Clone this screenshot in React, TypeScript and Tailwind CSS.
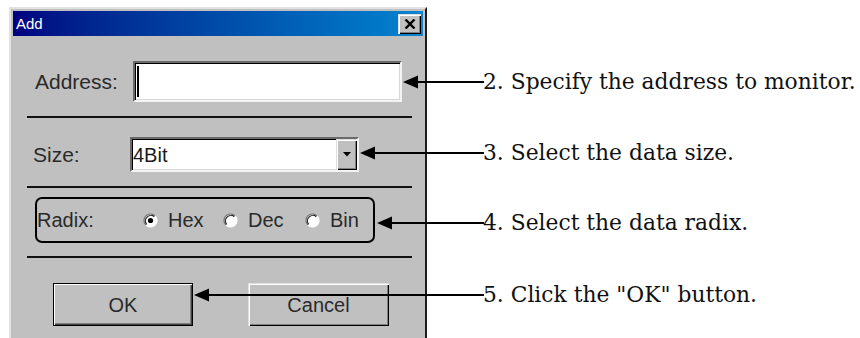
const ui = "font-['Liberation_Sans',Arial,sans-serif]";
const serif = "font-['DejaVu_Serif','Liberation_Serif',serif]";

const sunken =
  "border-2 border-t-[#6a6a6a] border-l-[#6a6a6a] border-r-[#f4f4f4] border-b-[#f4f4f4] shadow-[inset_1px_1px_0_#000,inset_-1px_-1px_0_#d8d8d8]";
const raised =
  "bg-[#c0c0c0] shadow-[inset_1px_1px_0_#dfdfdf,inset_2px_2px_0_#fff,inset_-1px_-1px_0_#000,inset_-2px_-2px_0_#808080]";

function Separator({ className = "" }: { className?: string }) {
  return <div className={`ml-[14px] w-[385px] h-[2px] bg-[#111] ${className}`} />;
}

function Radio({ label, checked, width }: { label: string; checked?: boolean; width: string }) {
  return (
    <div className={`flex items-center ${width}`}>
      <svg width={15} height={15} viewBox="0 0 15 15" className="shrink-0">
        <circle cx={7.5} cy={7.5} r={6.5} fill="#fff" />
        <path d="M2.9 12.1A6.5 6.5 0 0 1 12.1 2.9" fill="none" stroke="#707070" strokeWidth={1.2} />
        <path d="M3.7 11.3A5.4 5.4 0 0 1 11.3 3.7" fill="none" stroke="#202020" strokeWidth={1.2} />
        <path d="M12.1 2.9A6.5 6.5 0 0 1 2.9 12.1" fill="none" stroke="#fff" strokeWidth={1.2} />
        {checked && <circle cx={7.5} cy={7.5} r={2.6} fill="#000" />}
      </svg>
      <span className="ml-[10px] text-[20px] leading-none text-[#2a2a2a]">{label}</span>
    </div>
  );
}

const notes = [
  { text: "2. Specify the address to monitor.", mt: "mt-[67px]" },
  { text: "3. Select the data size.", mt: "mt-[41px]" },
  { text: "4. Select the data radix.", mt: "mt-[40px]" },
  { text: '5. Click the "OK" button.', mt: "mt-[42px]" },
];

export default function App() {
  return (
    <div className="relative w-[860px] h-[338px] overflow-hidden bg-white">
      <div className="flex">
        {/* Dialog window */}
        <div
          className={`ml-[9px] mt-[7px] w-[418px] h-[340px] shrink-0 bg-[#c0c0c0] border-2 border-t-[#e2e2e2] border-l-[#e2e2e2] border-r-[#1c1c1c] border-b-[#1c1c1c] p-[2px] ${ui}`}
        >
          {/* Title bar */}
          <div className="h-[25px] flex items-center justify-between pl-[3px] pr-[2px] bg-linear-to-r from-[#000080] to-[#1084d0]">
            <span className="text-white text-[15px] leading-none">Add</span>
            <div className={`w-[23px] h-[20px] flex items-center justify-center ${raised}`}>
              <svg width={12} height={10} viewBox="0 0 12 10">
                <path d="M1.5 0.5L10.5 9.5M10.5 0.5L1.5 9.5" stroke="#000" strokeWidth={2.4} />
              </svg>
            </div>
          </div>

          {/* Address */}
          <div className="mt-[25px] h-[41px] flex items-center pl-[22px]">
            <span className="w-[98px] text-[21px] leading-none text-[#2a2a2a]">Address:</span>
            <div className={`w-[269px] h-full bg-white flex items-center pl-[2px] ${sunken}`}>
              <div className="w-[2px] h-[31px] bg-black" />
            </div>
          </div>

          <Separator className="mt-[14px]" />

          {/* Size */}
          <div className="mt-[19px] h-[35px] flex items-center pl-[20px]">
            <span className="w-[97px] text-[21px] leading-none text-[#2a2a2a]">Size:</span>
            <div className={`w-[229px] h-full bg-white flex items-stretch ${sunken}`}>
              <span className="flex-1 flex items-center pl-[1px] text-[20px] leading-none text-[#1a1a1a]">4Bit</span>
              <div className={`w-[21px] flex items-center justify-center ${raised}`}>
                <svg width={8} height={5} viewBox="0 0 8 5">
                  <path d="M0 0H8L4 4.5Z" fill="#000" />
                </svg>
              </div>
            </div>
          </div>

          <Separator className="mt-[14px]" />

          {/* Radix */}
          <div className="mt-[9px] ml-[22px] w-[340px] h-[46px] border-2 border-black rounded-[7px] flex items-center">
            <span className="w-[106px] text-[20px] leading-none text-[#2a2a2a]">Radix:</span>
            <Radio label="Hex" checked width="w-[80px]" />
            <Radio label="Dec" width="w-[82px]" />
            <Radio label="Bin" width="w-[60px]" />
          </div>

          <Separator className="mt-[13px]" />

          {/* Buttons */}
          <div className="mt-[25px] flex pl-[40px] gap-[55px]">
            <button className="w-[140px] h-[43px] border border-black bg-[#c0c0c0] shadow-[inset_1px_1px_0_#fff,inset_-1px_-1px_0_#404040,inset_-2px_-2px_0_#808080] text-[20px] text-[#2a2a2a]">
              OK
            </button>
            <button className={`w-[141px] h-[43px] text-[20px] text-[#2a2a2a] ${raised}`}>Cancel</button>
          </div>
        </div>

        {/* Callout texts */}
        <div className={`ml-[56px] flex flex-col ${serif}`}>
          {notes.map((n) => (
            <div key={n.text} className={`${n.mt} h-[30px] flex items-center whitespace-nowrap text-[21.8px] text-[#111]`}>
              {n.text}
            </div>
          ))}
        </div>
      </div>

      {/* Callout arrows */}
      <svg className="absolute left-0 top-0 pointer-events-none" width={860} height={338}>
        <g fill="#000" stroke="#000" strokeWidth={2}>
          <line x1={416} y1={82} x2={484} y2={82} />
          <polygon points="403,82 418,75.5 418,88.5" strokeWidth={0} />
          <line x1={373} y1={153} x2={484} y2={153} />
          <polygon points="360,153 375,146.5 375,159.5" strokeWidth={0} />
          <line x1={390} y1={223} x2={484} y2={223} />
          <polygon points="377,223 392,216.5 392,229.5" strokeWidth={0} />
          <line x1={207} y1={295} x2={484} y2={295} />
          <polygon points="194,295 209,288.5 209,301.5" strokeWidth={0} />
        </g>
      </svg>
    </div>
  );
}
